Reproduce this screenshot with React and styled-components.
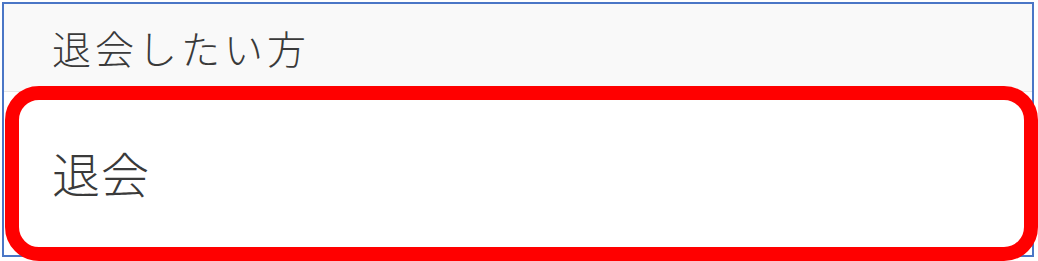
import React from "react";
import styled, { createGlobalStyle } from "styled-components";

const Global = createGlobalStyle`
  html, body { margin: 0; padding: 0; background: #ffffff; }
  body { font-family: "Noto Sans CJK JP", "Noto Sans", sans-serif; }
`;

const Page = styled.div`
  position: relative;
  width: 1038px;
  height: 261px;
  padding: 2px 0 0 2px;
  box-sizing: border-box;
`;

const Table = styled.div`
  width: 1032px;
  height: 255px;
  box-sizing: border-box;
  border: 2px solid #4a76c6;
  display: flex;
  flex-direction: column;
`;

const Row = styled.div`
  display: flex;
  align-items: center;
  box-sizing: border-box;
  padding-left: ${(p) => p.$pad}px;
  height: ${(p) => p.$h}px;
  flex: ${(p) => (p.$grow ? 1 : "none")};
  background: ${(p) => p.$bg};
  border-bottom: ${(p) => (p.$line ? "1px solid #e6e6e6" : "none")};
`;

const Label = styled.span`
  font-family: "Noto Sans CJK JP", sans-serif;
  font-size: ${(p) => p.$size}px;
  font-weight: 300;
  letter-spacing: ${(p) => p.$ls}px;
  color: #3a3a3a;
  line-height: 1;
  transform: translateY(${(p) => p.$dy}px);
`;

const Highlight = styled.div`
  position: absolute;
  left: 5px;
  top: 86px;
  width: 1033px;
  height: 175px;
  box-sizing: border-box;
  border: 14px solid #ff0000;
  border-radius: 34px;
  pointer-events: none;
`;

export default function App() {
  return (
    <>
      <Global />
      <Page>
        <Table>
          <Row $h={88} $bg="#f9f9f9" $line $pad={48}>
            <Label $size={39} $ls={4} $dy={0}>退会したい方</Label>
          </Row>
          <Row $grow $bg="#ffffff" $pad={48}>
            <Label $size={48} $ls={1} $dy={-2}>退会</Label>
          </Row>
        </Table>
        <Highlight />
      </Page>
    </>
  );
}
